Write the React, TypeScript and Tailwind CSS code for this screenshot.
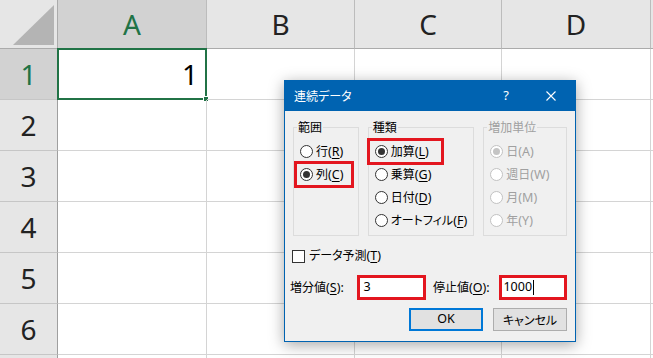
import React from 'react';

const colW = ['w-[149px]', 'w-[148px]', 'w-[147px]', 'w-[149px]'];
const colLabels = ['A', 'B', 'C', 'D'];
const rows = [1, 2, 3, 4, 5, 6, 7];

const jp = "font-['Noto_Sans_CJK_JP','Noto_Sans',sans-serif] [font-feature-settings:'palt']";

// latin part of a label, e.g. "(R)" with the access key underlined
function Acc({ k, plain, tail }: { k: string; plain?: boolean; tail?: string }) {
  return (
    <span className="font-['Noto_Sans',sans-serif] text-[12.5px]">
      ({plain ? k : <u className="underline-offset-2">{k}</u>}){tail}
    </span>
  );
}

function Radio({ checked, disabled }: { checked?: boolean; disabled?: boolean }) {
  return (
    <span
      className={
        'flex h-[13px] w-[13px] shrink-0 items-center justify-center rounded-full border bg-white ' +
        (disabled ? 'border-[#c2c2c2]' : 'border-[#333333]')
      }
    >
      {checked && (
        <span className={'h-[7px] w-[7px] rounded-full ' + (disabled ? 'bg-[#c4c4c4]' : 'bg-[#333333]')} />
      )}
    </span>
  );
}

function Option({
  label,
  accel,
  checked,
  disabled,
  mark,
}: {
  label: string;
  accel: string;
  checked?: boolean;
  disabled?: boolean;
  mark?: string;
}) {
  return (
    <div className="relative flex h-[23px] items-center gap-[3px] pl-[6px]">
      <Radio checked={checked} disabled={disabled} />
      <span className={disabled ? 'text-[#a0a0a0]' : 'text-black'}>
        {label}
        <Acc k={accel} plain={disabled} />
      </span>
      {mark && <span className={'pointer-events-none absolute border-[3px] border-[#e3161f] ' + mark} />}
    </div>
  );
}

function Group({ title, width, disabled, children }: { title: string; width: string; disabled?: boolean; children: React.ReactNode }) {
  return (
    <fieldset className={'h-[117px] border border-[#dcdcdc] pt-[5px] ' + width}>
      <legend className={'ml-[3px] px-[1px] leading-[16px] ' + (disabled ? 'text-[#a0a0a0]' : 'text-black')}>{title}</legend>
      {children}
    </fieldset>
  );
}

function SeriesDialog() {
  return (
    <div
      className={
        'absolute left-[284px] top-[80px] w-[292px] border border-[#0063b1] bg-[#f0f0f0] text-[12px] text-black shadow-[0_3px_14px_rgba(0,0,0,0.35)] ' +
        jp
      }
    >
      <div className="flex h-[30px] items-center bg-[#0063b1] pl-[9px] pr-[19px] text-white">
        <span className="flex-1">連続データ</span>
        <span className="mr-[37px] font-['Noto_Sans',sans-serif] text-[13px]">?</span>
        <svg width="10" height="10" viewBox="0 0 10 10" className="block">
          <path d="M0.5 0.5L9.5 9.5M9.5 0.5L0.5 9.5" stroke="white" strokeWidth="1.1" />
        </svg>
      </div>
      <div className="px-[8px] pb-[10px] pt-[8px]">
        <div className="flex gap-[9px]">
          <Group title="範囲" width="w-[66px]">
            <Option label="行" accel="R" />
            <Option label="列" accel="C" checked mark="-top-[2px] -bottom-[2px] left-0 w-[60px]" />
          </Group>
          <Group title="種類" width="w-[107px]">
            <Option label="加算" accel="L" checked mark="-top-[2px] -bottom-[2px] -left-[2px] w-[77px]" />
            <Option label="乗算" accel="G" />
            <Option label="日付" accel="D" />
            <Option label="オートフィル" accel="F" />
          </Group>
          <Group title="増加単位" width="w-[84px]" disabled>
            <Option label="日" accel="A" checked disabled />
            <Option label="週日" accel="W" disabled />
            <Option label="月" accel="M" disabled />
            <Option label="年" accel="Y" disabled />
          </Group>
        </div>
        <div className="mt-[12px] flex h-[16px] items-center gap-[4px] -ml-px">
          <span className="h-[13px] w-[13px] border border-[#333333] bg-white" />
          <span>
            データ予測
            <Acc k="T" />
          </span>
        </div>
        <div className="mt-[11px] flex items-center -ml-[3px]">
          <span className="w-[68px]">
            増分値
            <Acc k="S" tail=":" />
          </span>
          <div className="flex h-[25px] w-[69px] items-center border-[3px] border-[#e3161f] bg-white pl-[3px] font-['Noto_Sans',sans-serif] text-[12.5px]">
            3
          </div>
          <span className="ml-[7px] w-[67px]">
            停止値
            <Acc k="O" tail=":" />
          </span>
          <div className="flex h-[25px] w-[68px] items-center border-[3px] border-[#e3161f] bg-white pl-[1px] font-['Noto_Sans',sans-serif] text-[12.5px]">
            1000
            <span className="ml-[1px] h-[15px] w-px bg-black" />
          </div>
        </div>
        <div className="mt-[8px] flex justify-end gap-[10px]">
          <button className="flex h-[23px] w-[74px] items-center justify-center border-2 border-[#0078d7] bg-[#e1e1e1] font-['Noto_Sans',sans-serif] text-[12.5px]">
            OK
          </button>
          <button className="flex h-[23px] w-[74px] items-center justify-center border border-[#adadad] bg-[#e1e1e1]">キャンセル</button>
        </div>
      </div>
    </div>
  );
}

export default function App() {
  return (
    <div className="relative h-[358px] w-[653px] overflow-hidden bg-white font-['Noto_Sans',sans-serif]">
      <div className="flex h-[49px] bg-[#e6e6e6]">
        <div className="flex w-[58px] shrink-0 items-start justify-end border-b border-r border-[#ababab] pr-[3px] pt-[5px]">
          <svg width="41" height="40" viewBox="0 0 41 40">
            <path d="M41 0V40H0Z" fill="#b4b4b4" />
          </svg>
        </div>
        {colLabels.map((c, i) => (
          <div
            key={c}
            className={
              'flex shrink-0 items-center justify-center border-b border-r border-b-[#ababab] border-r-[#bcbcbc] text-[28px] leading-none ' +
              colW[i] +
              (i === 0 ? ' bg-[#d2d2d2] text-[#217346]' : ' text-[#222222]')
            }
          >
            {c}
          </div>
        ))}
        <div className="flex-1 border-b border-[#ababab]" />
      </div>
      {rows.map((r) => (
        <div key={r} className="flex h-[51px]">
          <div
            className={
              'flex w-[58px] shrink-0 items-center justify-center border-b border-r border-b-[#c6c6c6] border-r-[#9f9f9f] text-[28px] leading-none ' +
              (r === 1 ? 'bg-[#d2d2d2] text-[#217346]' : 'bg-[#e6e6e6] text-[#222222]')
            }
          >
            {r < 7 ? r : null}
          </div>
          {colW.map((w, i) => (
            <div key={i} className={'relative flex shrink-0 items-center justify-end border-b border-r border-[#d4d4d4] pr-[8px] ' + w}>
              {r === 1 && i === 0 && (
                <>
                  <span className="text-[28px] leading-none text-black">1</span>
                  <span className="pointer-events-none absolute -left-px -top-px -bottom-px -right-px border-2 border-[#217346]" />
                  <span className="absolute -bottom-[3px] -right-[3px] h-[6px] w-[6px] border border-white bg-[#217346]" />
                </>
              )}
            </div>
          ))}
          <div className="flex-1 border-b border-[#d4d4d4]" />
        </div>
      ))}
      <SeriesDialog />
    </div>
  );
}
